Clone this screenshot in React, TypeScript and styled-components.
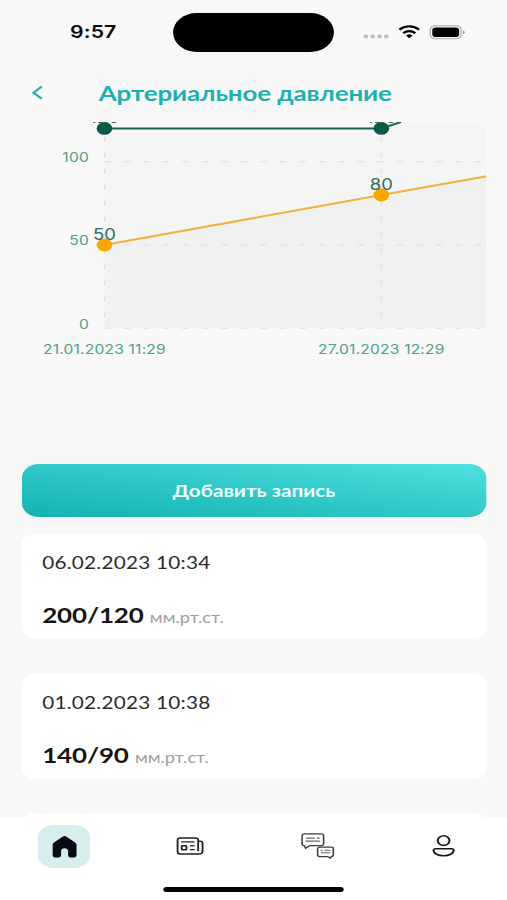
import React from "react";
import styled, { createGlobalStyle } from "styled-components";

const Global = createGlobalStyle`
  html, body { margin: 0; padding: 0; background: #f8f8f8; overflow: hidden; }
  *, *::before, *::after { box-sizing: border-box; }
`;

const lato = `Lato, "Open Sans", sans-serif`;
const inter = `Inter, "Liberation Sans", sans-serif`;

/* The phone layout is 416 units wide and widened to fill the window. */
const Screen = styled.div`
  width: 416px;
  height: 900px;
  display: flex;
  flex-direction: column;
  overflow: hidden;
  background: #f8f8f8;
  font-family: ${lato};
  transform: scaleX(1.21875);
  transform-origin: 0 0;
`;

const StatusBar = styled.div`
  height: 64px;
  flex: none;
  display: grid;
  grid-template-columns: 142px 132px 1fr;
  align-items: center;
`;

const Clock = styled.div`
  padding-left: 57.5px;
  font: 600 17.4px/20px ${inter};
  letter-spacing: 0.1px;
  color: #0b0b0b;
`;

const Island = styled.div`
  height: 39px;
  border-radius: 20px;
  background: #000;
`;

const StatusIcons = styled.svg`
  display: block;
  width: 90px;
  height: 20px;
  margin-left: 22px;
`;

const Header = styled.header`
  height: 58px;
  flex: none;
  display: flex;
  align-items: center;
  padding: 0 0 0 25.5px;
`;

const BackIcon = styled.svg`
  display: block;
  width: 9.6px;
  height: 15.4px;
`;

const Title = styled.h1`
  margin: 0 0 0 46px;
  font: 700 21.3px/26px ${lato};
  letter-spacing: -0.12px;
  white-space: nowrap;
  color: #1eb0b1;
`;

const Content = styled.main`
  flex: 1;
  min-height: 0;
  overflow: hidden;
  padding: 0 16.8px 0 17.6px;
`;

const Chart = styled.svg`
  display: block;
  width: 381.6px;
  height: 250px;
`;

const AxisLabel = styled.text`
  font: 400 12.8px ${inter};
  letter-spacing: 0.16px;
  fill: #509f85;
`;

const PointLabel = styled.text`
  font: 400 15.2px ${inter};
  fill: #2f6d5c;
  text-anchor: middle;
`;

const AddButton = styled.button`
  display: block;
  width: 100%;
  height: 53px;
  margin: 92px 0 16.5px;
  padding: 0;
  border: 0;
  border-radius: 14px;
  background: linear-gradient(to top right, #14b2b3 0%, #31c8c8 50%, #50e1df 100%);
  color: #effffd;
  font: 700 17px/52px ${lato};
`;

const Card = styled.article`
  height: 105.5px;
  margin-bottom: 34px;
  padding: 18.5px 17px 0;
  border-radius: 11px;
  background: #fff;
`;

const CardDate = styled.div`
  font: 400 17px/22px ${lato};
  letter-spacing: 0.2px;
  color: #2a2a2a;
`;

const Reading = styled.div`
  display: flex;
  align-items: baseline;
  gap: 5px;
  margin-top: 28px;
  line-height: 26px;
`;

const Value = styled.strong`
  font-weight: 700;
  font-size: 21.3px;
  letter-spacing: -0.1px;
  color: #151515;
`;

const Unit = styled.span`
  font-size: 14.9px;
  color: #a0a0a0;
`;

const TabBar = styled.nav`
  height: 83px;
  flex: none;
  display: flex;
  flex-direction: column;
  align-items: center;
  background: #fff;
`;

const Tabs = styled.div`
  width: 100%;
  display: grid;
  grid-template-columns: repeat(4, 1fr);
  justify-items: center;
  padding: 8px 0 0 0.8px;
`;

const Tab = styled.div<{ $active?: boolean }>`
  width: 42.6px;
  height: 42.5px;
  display: flex;
  align-items: center;
  justify-content: center;
  border-radius: 13px;
  background: ${(p) => (p.$active ? "#d7eeed" : "transparent")};
  svg { display: block; overflow: visible; }
`;

const HomeIndicator = styled.div`
  width: 148px;
  height: 5px;
  margin: 19px 0 0 0.8px;
  border-radius: 3px;
  background: #000;
`;

const records = [
  { date: "06.02.2023 10:34", value: "200/120" },
  { date: "01.02.2023 10:38", value: "140/90" },
];

const X1 = 67.7;
const X2 = 294.9;
const END = 381.4;

function PressureChart() {
  return (
    <Chart viewBox="0 0 381.6 250">
      <path d={`M${X1} 6.4H${X2}L311 0H${END}V206.3H${X1}Z`} fill="#000" fillOpacity="0.012" />
      <path d={`M${X1} 123L${X2} 73L${END} 54.3V206.3H${X1}Z`} fill="#000" fillOpacity="0.016" />
      <g stroke="#dedede" strokeWidth="1.1" strokeDasharray="5.33 10.66">
        {[39.7, 123, 206.3].map((y) => (
          <path key={y} d={`M${X1} ${y}H377`} />
        ))}
        {[X1, X2].map((x) => (
          <path key={x} d={`M${x} -1.5V206`} />
        ))}
      </g>
      <path d={`M${X1} 6.4H${X2}L311 0`} fill="none" stroke="#1c6553" strokeWidth="2" />
      <path d={`M${X1} 123L${X2} 73L${END} 54.3`} fill="none" stroke="#f3b13f" strokeWidth="2" />
      <g fill="#075b49">
        <circle cx={X1} cy="6.4" r="6.4" />
        <circle cx={X2} cy="6.4" r="6.4" />
      </g>
      <g fill="#ffa500">
        <circle cx={X1} cy="123" r="6.4" />
        <circle cx={X2} cy="73" r="6.4" />
      </g>
      <PointLabel x={X1} y="1.4">120</PointLabel>
      <PointLabel x={X2} y="1.4">120</PointLabel>
      <PointLabel x={X1} y="118">50</PointLabel>
      <PointLabel x={X2} y="68">80</PointLabel>
      <g textAnchor="end">
        <AxisLabel x="55" y="40.2">100</AxisLabel>
        <AxisLabel x="55" y="123.5">50</AxisLabel>
        <AxisLabel x="55" y="206.8">0</AxisLabel>
      </g>
      <g textAnchor="middle">
        <AxisLabel x={X1} y="231.7">21.01.2023 11:29</AxisLabel>
        <AxisLabel x={X2} y="231.7">27.01.2023 12:29</AxisLabel>
      </g>
    </Chart>
  );
}

function HomeIcon() {
  return (
    <svg width="20" height="21.4" viewBox="0 0 20 21.4">
      <path
        fill="#050b16"
        d="M8.7.6a2 2 0 0 1 2.6 0l7.4 5.9a2.6 2.6 0 0 1 1.1 2.1v11a1.8 1.8 0 0 1-1.8 1.8h-3.3a1.8 1.8 0 0 1-1.8-1.8v-4.4a2.9 2.9 0 0 0-5.8 0v4.4a1.8 1.8 0 0 1-1.8 1.8H2a1.8 1.8 0 0 1-1.8-1.8V8.6a2.6 2.6 0 0 1 1.1-2.1Z"
      />
    </svg>
  );
}

function NewsIcon() {
  return (
    <svg width="22" height="18" viewBox="0 0 22 18" fill="none" stroke="#202020" strokeWidth="1.5" strokeLinecap="round" strokeLinejoin="round">
      <path d="M17.6 4.3V3.1A2.2 2.2 0 0 0 15.4.9H2.9A2.2 2.2 0 0 0 .7 3.1v11.3a2.6 2.6 0 0 0 2.6 2.6h15.3a2.6 2.6 0 0 0 2.6-2.6V6.2a1.9 1.9 0 0 0-1.9-1.9h-1.7v9.2" />
      <path d="M4.2 4.9h10M11.3 8.9h2.9M11.3 12.7h2.9" strokeWidth="1.3" />
      <rect x="4.1" y="8.7" width="3.9" height="4" rx=".5" />
    </svg>
  );
}

function ChatIcon() {
  return (
    <svg width="26" height="26" viewBox="0 0 26 26" fill="none" stroke="#3c3c3c" strokeWidth="1.25" strokeLinejoin="round" strokeLinecap="round">
      <path d="M2.7.9h14a1.8 1.8 0 0 1 1.8 1.8v8.2a1.8 1.8 0 0 1-1.8 1.8H7.1l-3.3 2.6-1.1-2.6a1.8 1.8 0 0 1-1.8-1.8V2.7A1.8 1.8 0 0 1 2.7.9Z" />
      <path d="M4.6 5.2h6.2M13.4 5.2h1.4M4.1 8.2h11" stroke="#666" />
      <path d="M15.3 14.1h9.5a1.7 1.7 0 0 1 1.7 1.7v6a1.7 1.7 0 0 1-1.7 1.7l-.8 1.8-2.2-1.8h-6.5a1.7 1.7 0 0 1-1.7-1.7v-6a1.7 1.7 0 0 1 1.7-1.7Z" />
      <path d="M16.5 17.3h1M19.5 17.3h4.2M16.6 19.7h6.9" stroke="#666" strokeWidth="1.1" />
    </svg>
  );
}

function UserIcon() {
  return (
    <svg width="18" height="22" viewBox="0 0 18 22" fill="none" stroke="#161616" strokeWidth="1.6">
      <circle cx="9" cy="5.6" r="4.8" />
      <path d="M2.2 13.7h13.6a1.5 1.5 0 0 1 1.5 1.6c0 3.3-3.9 5.5-8.3 5.5S.7 18.6.7 15.3a1.5 1.5 0 0 1 1.5-1.6Z" />
    </svg>
  );
}

export default function App() {
  return (
    <>
      <Global />
      <Screen>
        <StatusBar>
          <Clock>9:57</Clock>
          <Island />
          <StatusIcons viewBox="0 0 90 20">
            <g fill="#bdbdbd">
              {[4.2, 9.8, 15.4, 21].map((x) => (
                <circle key={x} cx={x} cy="14.5" r="1.9" />
              ))}
            </g>
            <g fill="none" stroke="#000" strokeWidth="2.3">
              <path d="M31.8 7.8a11.2 11.2 0 0 1 16 0" />
              <path d="M34.9 11.2a6.9 6.9 0 0 1 9.8 0" />
            </g>
            <path d="M37.2 13.6a3.7 3.7 0 0 1 5.2 0L39.8 16.2Z" />
            <rect x="57" y="3.7" width="25.4" height="13.1" rx="4.2" fill="none" stroke="#aaa" />
            <rect x="58.7" y="5.4" width="22" height="9.7" rx="2.8" />
            <path d="M83.8 8.2a2.1 2.1 0 0 1 0 4Z" fill="#999" />
          </StatusIcons>
        </StatusBar>
        <Header>
          <BackIcon viewBox="0 0 10 16" fill="none" stroke="#1eb0b1" strokeWidth="2.1">
            <path d="M8.6 1.6L1.6 8l7 6.4" />
          </BackIcon>
          <Title>Артериальное давление</Title>
        </Header>
        <Content>
          <PressureChart />
          <AddButton>Добавить запись</AddButton>
          {records.map((r) => (
            <Card key={r.date}>
              <CardDate>{r.date}</CardDate>
              <Reading>
                <Value>{r.value}</Value>
                <Unit>мм.рт.ст.</Unit>
              </Reading>
            </Card>
          ))}
          <Card />
        </Content>
        <TabBar>
          <Tabs>
            <Tab $active><HomeIcon /></Tab>
            <Tab><NewsIcon /></Tab>
            <Tab><ChatIcon /></Tab>
            <Tab><UserIcon /></Tab>
          </Tabs>
          <HomeIndicator />
        </TabBar>
      </Screen>
    </>
  );
}
